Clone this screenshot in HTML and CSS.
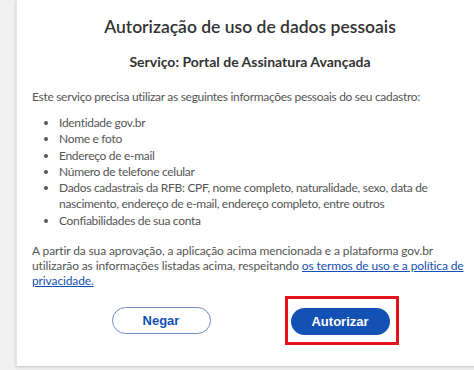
FILE: index.html
```html
<!DOCTYPE html>
<html lang="pt-BR">
<head>
    <meta charset="UTF-8">
    <meta name="viewport" content="width=device-width, initial-scale=1.0">
    <title>Autorização de uso de dados pessoais</title>
    <link rel="stylesheet" href="styles.css">
</head>
<body>
    <div class="card">
        <h1>Autorização de uso de dados pessoais</h1>
        <h2>Serviço: Portal de Assinatura Avançada</h2>
        <p class="intro">Este serviço precisa utilizar as seguintes informações pessoais do seu cadastro:</p>
        <ul class="data-list">
            <li>Identidade gov.br</li>
            <li>Nome e foto</li>
            <li>Endereço de e-mail</li>
            <li>Número de telefone celular</li>
            <li>Dados cadastrais da RFB: CPF, nome completo, naturalidade, sexo, data de nascimento, endereço de e-mail, endereço completo, entre outros</li>
            <li>Confiabilidades de sua conta</li>
        </ul>
        <p class="terms">A partir da sua aprovação, a aplicação acima mencionada e a plataforma gov.br utilizarão as informações listadas acima, respeitando <a href="#">os termos de uso e a política de privacidade.</a></p>
        <div class="actions">
            <button class="btn btn-secondary">Negar</button>
            <div class="highlight">
                <button class="btn btn-primary">Autorizar</button>
            </div>
        </div>
    </div>
</body>
</html>
```

FILE: styles.css
```css
html, body {
    margin: 0;
    padding: 0;
}
body {
    font-family: Lato, "Open Sans", sans-serif;
    background-color: #f0f0f0;
    color: #555;
    overflow: hidden;
    width: 474px;
    height: 370px;
}
.card {
    background-color: white;
    margin-left: 16px;
    width: 467px;
    height: 366px;
    box-sizing: border-box;
    padding: 14px 15px 0 15px;
    box-shadow: 0 1px 3px rgba(0,0,0,0.18);
    border-left: 1px solid #e6e6e6;
}
h1 {
    font-size: 17.5px;
    font-weight: 600;
    color: #333;
    text-align: center;
    margin: 0;
    line-height: 26px;
}
h2 {
    font-size: 14px;
    font-weight: 700;
    color: #333;
    text-align: center;
    margin: 14px 0 0 0;
    line-height: 16px;
}
.intro,
.data-list {
    font-size: 12px;
    letter-spacing: -0.3px;
}
.intro {
    margin: 19px 0 0 0;
    line-height: 16px;
}
.data-list {
    line-height: 16.3px;
    margin: 10px 0 0 0;
    padding-left: 27px;
}
.terms {
    font-size: 12px;
    letter-spacing: -0.12px;
    line-height: 15px;
    margin: 14px 0 0 0;
}
.terms a {
    color: #1351b4;
}
.actions {
    display: flex;
    justify-content: center;
    align-items: center;
    gap: 74px;
    margin-top: 8px;
    padding-left: 10px;
}
.btn {
    font-family: Arial, "Liberation Sans", sans-serif;
    font-weight: bold;
    font-size: 13px;
    width: 99px;
    height: 27px;
    border-radius: 14px;
    cursor: pointer;
}
.btn-secondary {
    background-color: white;
    color: #1351b4;
    border: 1px solid #6d8cc8;
}
.btn-primary {
    background-color: #1351b4;
    color: white;
    border: none;
}
.highlight {
    border: 3px solid #e3121b;
    padding: 9px 6px 7px 3px;
}
```
